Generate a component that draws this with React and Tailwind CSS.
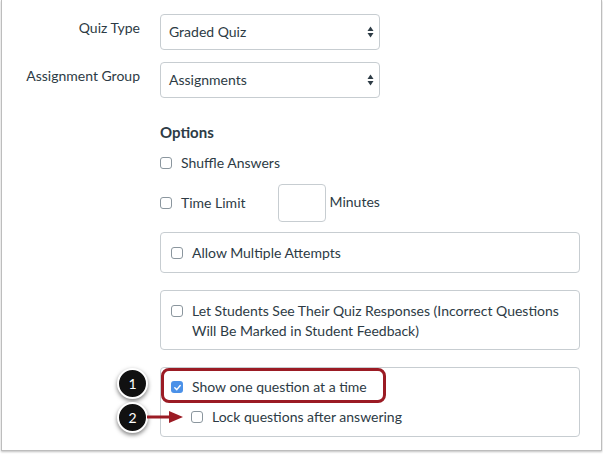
import React from 'react';

const font = { fontFamily: 'Lato, "Open Sans", sans-serif' };

function Box({ checked }) {
  if (checked) {
    return (
      <span className="flex h-[12px] w-[12px] shrink-0 items-center justify-center rounded-[3px] bg-[#4b91e8]">
        <svg width="9" height="9" viewBox="0 0 10 10">
          <path d="M2 5.2 L4.2 7.4 L8 2.8" fill="none" stroke="#fff" strokeWidth="1.6" strokeLinecap="round" strokeLinejoin="round" />
        </svg>
      </span>
    );
  }
  return <span className="block h-[12px] w-[12px] shrink-0 rounded-[3px] border border-[#8b969e] bg-white" />;
}

function Check({ label, checked, className = '' }) {
  return (
    <div className={'flex items-center gap-[9px] ' + className}>
      <Box checked={checked} />
      <span>{label}</span>
    </div>
  );
}

function Select({ value }) {
  return (
    <div className="flex h-[36px] w-[220px] items-center justify-between rounded-[4px] border border-[#c7cdd1] bg-white pl-[8px] pr-[5px]">
      <span>{value}</span>
      <svg width="7" height="12" viewBox="0 0 7 12">
        <path d="M3.5 0.5 L6.5 5 L0.5 5 Z" fill="#2d3b45" />
        <path d="M3.5 11.5 L6.5 7 L0.5 7 Z" fill="#2d3b45" />
      </svg>
    </div>
  );
}

function Marker({ n, top }) {
  return (
    <div
      className="absolute left-[117px] flex h-[31px] w-[31px] items-center justify-center rounded-full border-2 border-white bg-[#111] text-[14px] text-white shadow-[0_2px_4px_rgba(0,0,0,0.5)]"
      style={{ top }}
    >
      {n}
    </div>
  );
}

export default function App() {
  return (
    <div className="relative h-[454px] w-[603px] bg-white text-[14px] leading-[20px] text-[#2d3b45]" style={font}>
      <div className="ml-px h-[451px] w-[601px] border-x border-b border-[#bdbdbd] shadow-[0_1px_2px_rgba(0,0,0,0.25)]">
        <div className="flex pt-[14px]">
          <div className="w-[138px] pt-[4px] text-right">Quiz Type</div>
          <div className="ml-[20px]">
            <Select value="Graded Quiz" />
          </div>
        </div>
        <div className="mt-[12px] flex">
          <div className="w-[138px] pt-[4px] text-right">Assignment Group</div>
          <div className="ml-[20px]">
            <Select value="Assignments" />
          </div>
        </div>

        <div className="ml-[158px] flex w-[420px] flex-col">
          <div className="mt-[24px] text-[15px] font-bold">Options</div>
          <Check className="mt-[11px]" label="Shuffle Answers" />
          <div className="mt-[11px] flex h-[38px] items-center">
            <Check label="Time Limit" />
            <div className="ml-[32px] h-[38px] w-[48px] rounded-[4px] border border-[#c7cdd1]" />
            <span className="ml-[4px] -mt-[2px]">Minutes</span>
          </div>
          <div className="mt-[10px] flex h-[41px] items-center rounded-[4px] border border-[#c7cdd1] pl-[10px]">
            <Check label="Allow Multiple Attempts" />
          </div>
          <div className="mt-[17px] flex h-[60px] items-start gap-[9px] rounded-[4px] border border-[#c7cdd1] pl-[10px] pt-[10px]">
            <span className="mt-[4px]">
              <Box />
            </span>
            <span>
              <span className="block">Let Students See Their Quiz Responses (Incorrect Questions</span>
              <span className="block">Will Be Marked in Student Feedback)</span>
            </span>
          </div>
          <div className="mt-[17px] flex h-[70px] flex-col rounded-[4px] border border-[#c7cdd1] pl-[10px] pt-[9px]">
            <Check checked label="Show one question at a time" />
            <Check className="ml-[20px] mt-[10px]" label="Lock questions after answering" />
          </div>
        </div>
      </div>

      <div className="absolute left-[161px] top-[368px] h-[35px] w-[225px] rounded-[8px] border-[3px] border-[#9b1b24]" />
      <Marker n="1" top={368} />
      <Marker n="2" top={402} />
      <svg className="absolute left-[147px] top-[410px]" width="38" height="14" viewBox="0 0 38 14">
        <path d="M0 7 L25 7" stroke="#9b1b24" strokeWidth="3" />
        <path d="M22 1 L36 7 L22 13 Z" fill="#9b1b24" />
      </svg>
    </div>
  );
}
